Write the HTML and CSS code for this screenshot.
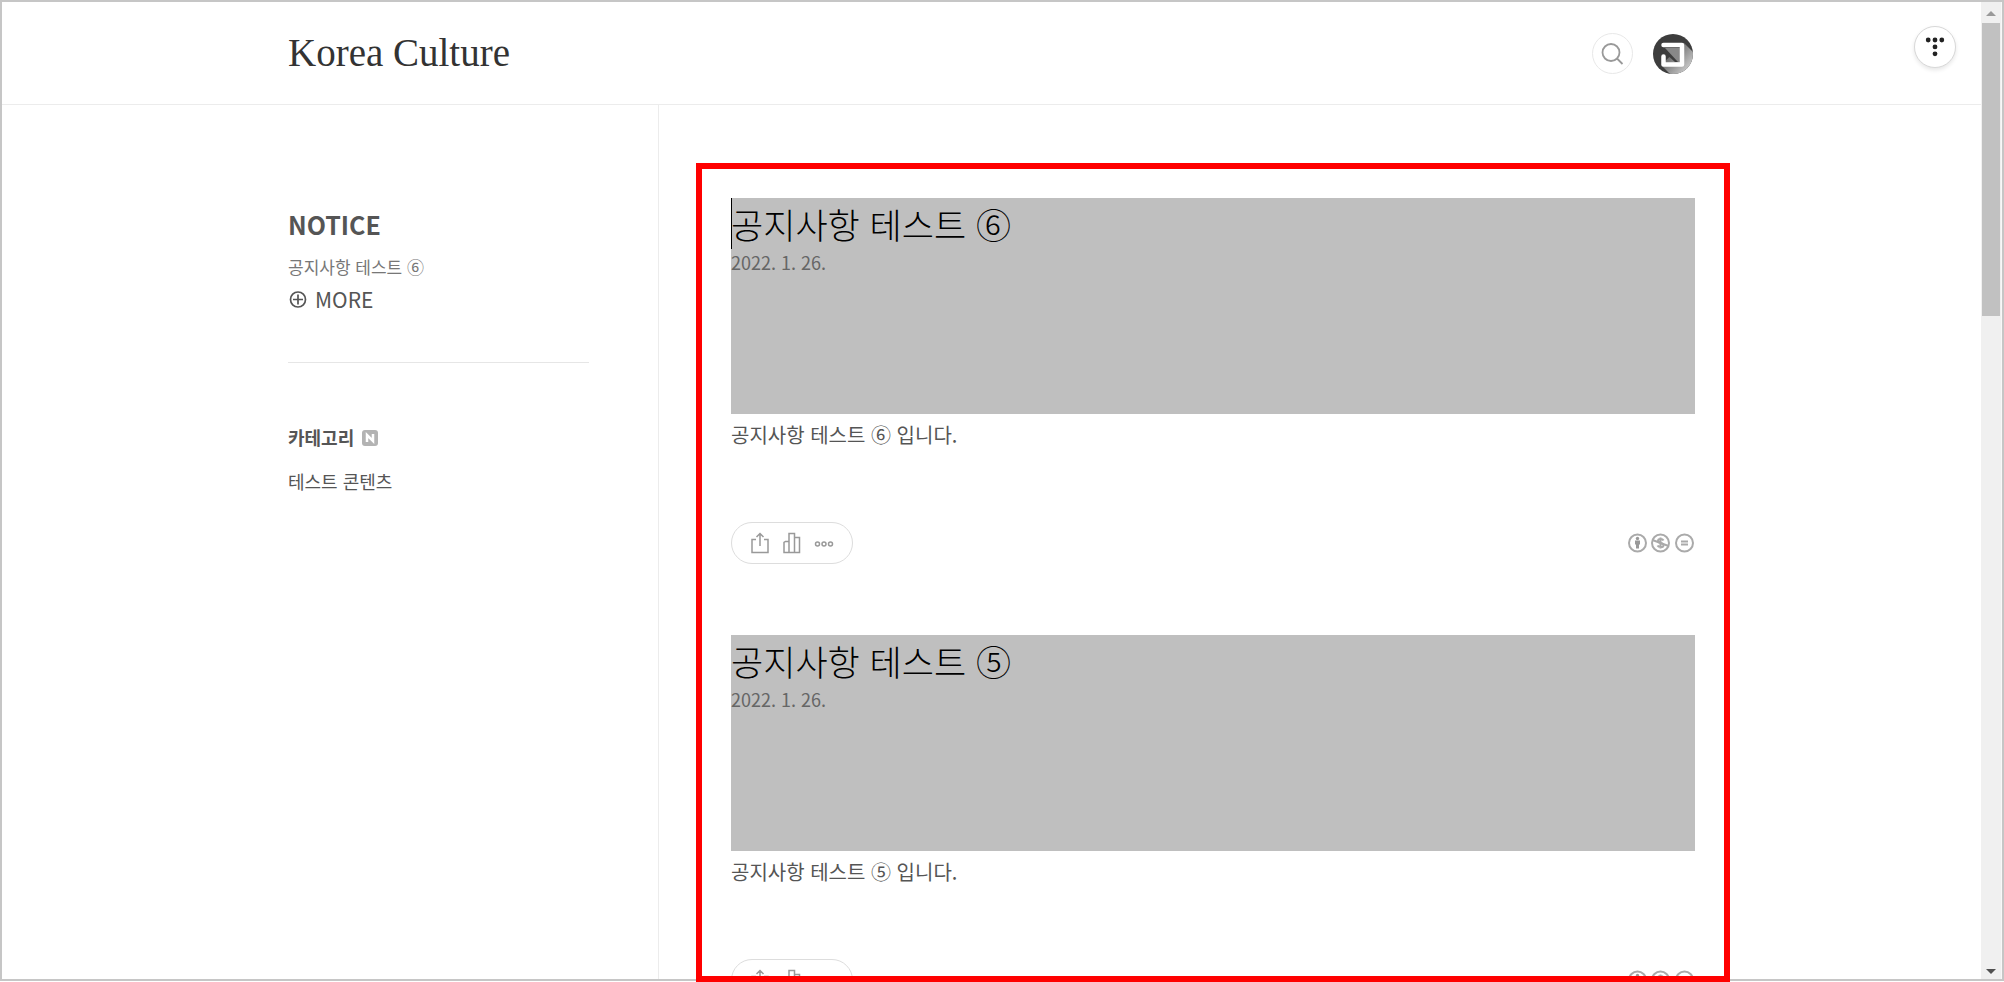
FILE: index.html
```html
<!DOCTYPE html>
<html lang="ko">
<head>
  <meta charset="UTF-8">
  <meta name="viewport" content="width=device-width, initial-scale=1.0">
  <title>Korea Culture</title>
  <link rel="stylesheet" href="styles.css">
</head>
<body>
  <!-- shared icons -->
  <svg class="sprite" aria-hidden="true">
    <symbol id="icon-share" viewBox="0 0 20 22">
      <path d="M6 7.500H2V20.500H18V7.500H14M10 14V2M6.500 5L10 1.500L13.500 5"/>
    </symbol>
    <symbol id="icon-stats" viewBox="0 0 20 22">
      <path d="M7 20.500H2V10.500L3.500 9.500H7M7 20.500V1.500H12.500V20.500H7M12.500 5.500H17.500V20.500H12.500"/>
    </symbol>
    <symbol id="icon-more" viewBox="0 0 20 22">
      <circle cx="3.500" cy="12" r="2"/><circle cx="10" cy="12" r="2"/><circle cx="16.500" cy="12" r="2"/>
    </symbol>
    <symbol id="icon-cc" viewBox="0 0 67 20">
      <g fill="none" stroke="#aaa" stroke-width="2">
        <circle cx="9.500" cy="10" r="8.500"/><circle cx="32.500" cy="10" r="8.500"/><circle cx="56.500" cy="10" r="8.500"/>
        <path d="M24.500 7L40.500 13"/>
        <path d="M35.500 7.500C34.500 5.500 30 5.500 30 8C30 10.500 35.500 9.500 35.500 12.200C35.500 14.800 30.500 14.500 29.500 12.500M32.500 4.500V15.500"/>
        <path d="M53 8.500H60M53 11.500H60"/>
      </g>
      <circle cx="9.500" cy="5.500" r="1.700" fill="#999"/>
      <path d="M7 7.500H12V11.500H11V15.500H8V11.500H7Z" fill="#999"/>
    </symbol>
  </svg>

  <div class="window">
    <div class="page">
      <header class="header">
        <div class="container header-inner">
          <h1 class="logo"><a href="#">Korea Culture</a></h1>
          <div class="header-tools">
            <button type="button" class="search-button" aria-label="검색">
              <svg width="24" height="24" viewBox="0 0 24 24" fill="none" stroke="#999" stroke-width="1.800">
                <circle cx="10" cy="10.500" r="8.500"/>
                <path d="M16 16.500L21.500 22"/>
              </svg>
            </button>
            <a href="#" class="profile" aria-label="프로필">
              <svg width="40" height="40" viewBox="0 0 40 40">
                <defs>
                  <linearGradient id="shade" x1="0.200" y1="0.200" x2="1" y2="0.900">
                    <stop offset="0" stop-color="#555"/>
                    <stop offset="1" stop-color="#ddd"/>
                  </linearGradient>
                  <clipPath id="round"><circle cx="20" cy="20" r="20"/></clipPath>
                </defs>
                <g clip-path="url(#round)">
                  <rect width="40" height="40" fill="#3d3d3d"/>
                  <path d="M31 9L40 18V40H17L8 31Z" fill="url(#shade)"/>
                  <path d="M12 13H27V28H22L12 19Z" fill="#3d3d3d"/>
                  <path d="M12 14H27V28H25Z" fill="#888"/>
                </g>
                <path d="M10.500 11H29V30.500H10.500V22.500" fill="none" stroke="#fff" stroke-width="4.500" stroke-linejoin="round" stroke-linecap="round"/>
              </svg>
            </a>
          </div>
        </div>
        <button type="button" class="menu-button" aria-label="티스토리 메뉴">
          <svg width="20" height="20" viewBox="0 0 20 20" fill="#222">
            <circle cx="3.200" cy="3" r="2.400"/><circle cx="10" cy="3" r="2.400"/><circle cx="16.800" cy="3" r="2.400"/>
            <circle cx="10" cy="9.900" r="2.400"/><circle cx="10" cy="16.800" r="2.400"/>
          </svg>
        </button>
      </header>

      <div class="container content">
        <aside class="sidebar">
          <section class="notice">
            <h2>NOTICE</h2>
            <a href="#" class="notice-link">공지사항 테스트 ⑥</a>
            <a href="#" class="more">
              <svg width="18" height="18" viewBox="0 0 18 18" fill="none" stroke="#555" stroke-width="1.700">
                <circle cx="9" cy="9.500" r="7.500"/><path d="M9 4.500V14.500M4 9.500H14"/>
              </svg>
              MORE
            </a>
          </section>
          <nav class="category">
            <a href="#" class="category-title">카테고리
              <svg width="16" height="18" viewBox="0 0 16 18">
                <rect y="2" width="16" height="16" rx="3" fill="#b3b3b3"/>
                <path d="M5 14V7L11 13V6" fill="none" stroke="#fff" stroke-width="2.500"/>
              </svg>
            </a>
            <a href="#" class="category-link">테스트 콘텐츠</a>
          </nav>
        </aside>

        <main class="posts">
          <article class="post">
            <header class="post-head active">
              <h2>공지사항 테스트 ⑥</h2>
              <time datetime="2022-01-26">2022. 1. 26.</time>
            </header>
            <p>공지사항 테스트 ⑥ 입니다.</p>
            <footer class="post-foot">
              <div class="actions">
                <button type="button" aria-label="공유하기"><svg><use href="#icon-share"/></svg></button>
                <button type="button" aria-label="통계"><svg><use href="#icon-stats"/></svg></button>
                <button type="button" aria-label="더보기"><svg><use href="#icon-more"/></svg></button>
              </div>
              <a href="#" aria-label="저작자표시 비영리 변경금지"><svg class="license"><use href="#icon-cc"/></svg></a>
            </footer>
          </article>

          <article class="post">
            <header class="post-head">
              <h2>공지사항 테스트 ⑤</h2>
              <time datetime="2022-01-26">2022. 1. 26.</time>
            </header>
            <p>공지사항 테스트 ⑤ 입니다.</p>
            <footer class="post-foot">
              <div class="actions">
                <button type="button" aria-label="공유하기"><svg><use href="#icon-share"/></svg></button>
                <button type="button" aria-label="통계"><svg><use href="#icon-stats"/></svg></button>
                <button type="button" aria-label="더보기"><svg><use href="#icon-more"/></svg></button>
              </div>
              <a href="#" aria-label="저작자표시 비영리 변경금지"><svg class="license"><use href="#icon-cc"/></svg></a>
            </footer>
          </article>
        </main>
      </div>
    </div>

    <div class="scrollbar" aria-hidden="true">
      <span class="arrow-up"></span>
      <span class="thumb"></span>
      <span class="arrow-down"></span>
    </div>
  </div>
</body>
</html>
```

FILE: styles.css
```css
* {
  box-sizing: border-box;
}
body {
  margin: 0;
  height: 100vh;
  padding-bottom: 1px;
  overflow: hidden;
  font-family: "Noto Sans CJK KR", "Noto Sans", sans-serif;
  font-size: 20px;
  color: #555;
  background: #fff;
}
h1, h2, p {
  margin: 0;
}
a {
  color: inherit;
  text-decoration: none;
}
button {
  padding: 0;
  border: none;
  background: none;
  cursor: pointer;
}
svg {
  display: block;
}
.sprite {
  position: absolute;
  width: 0;
  height: 0;
}

.window {
  display: flex;
  height: 100%;
  border: 2px solid #c6c6c6;
}
.page {
  flex: 1;
  min-width: 0;
  display: flex;
  flex-direction: column;
}
.container {
  width: 100%;
  max-width: 1407px;
  margin: 0 auto;
}

/* header */
.header {
  position: relative;
  border-bottom: 1px solid #ececec;
}
.header-inner {
  display: flex;
  align-items: center;
  justify-content: space-between;
  height: 102px;
}
.logo {
  font-family: "Liberation Serif", serif;
  font-size: 39px;
  line-height: 48px;
  font-weight: 400;
  color: #333;
}
.header-tools {
  display: flex;
  align-items: center;
  gap: 20px;
  padding: 1px 2px 0 0;
}
.search-button {
  display: flex;
  align-items: center;
  justify-content: center;
  width: 41px;
  height: 41px;
  border: 1px solid #e8e8e8;
  border-radius: 50%;
}
.menu-button {
  position: absolute;
  top: 24px;
  right: 25px;
  display: flex;
  align-items: center;
  justify-content: center;
  width: 42px;
  height: 42px;
  border: 1px solid #d8d8d8;
  border-radius: 50%;
  background: #fff;
  box-shadow: 0 2px 4px rgba(0, 0, 0, 0.1);
}

/* columns */
.content {
  flex: 1;
  min-height: 0;
  display: grid;
  grid-template-columns: 371px minmax(0, 1fr);
  grid-template-rows: minmax(0, 1fr);
}
.sidebar {
  padding: 99px 69px 0 0;
  border-right: 1px solid #ececec;
}
.notice {
  padding-bottom: 46px;
  border-bottom: 1px solid #e6e6e6;
}
.notice h2 {
  font-size: 25px;
  line-height: 40px;
  font-weight: 700;
}
.notice-link {
  display: block;
  margin-top: 8px;
  font-size: 17px;
  line-height: 30px;
  color: #777;
}
.more {
  display: flex;
  align-items: center;
  gap: 8px;
  padding-left: 1px;
  font-size: 21px;
  line-height: 34px;
}
.category {
  padding-top: 59px;
}
.category-title {
  display: flex;
  align-items: center;
  gap: 8px;
  font-size: 18px;
  line-height: 30px;
  font-weight: 700;
}
.category-link {
  display: block;
  margin-top: 14px;
  font-size: 18px;
  line-height: 30px;
}

/* post list */
.posts {
  margin: 58px -35px -3px 37px;
  padding: 29px 29px 0;
  border: 6px solid #f00;
  overflow: hidden;
}
.post {
  margin-bottom: 71px;
}
.post-head {
  position: relative;
  height: 216px;
  background: #bfbfbf;
}
.post-head h2 {
  font-size: 35px;
  line-height: 51px;
  font-weight: 300;
  color: #000;
}
.post-head time {
  display: block;
  font-size: 18px;
  line-height: 26px;
  color: #666;
}
/* text caret at the start of the title */
.active::before {
  content: "";
  position: absolute;
  top: 0;
  left: 0;
  width: 1px;
  height: 51px;
  background: #000;
}
.post p {
  margin-top: 4px;
  font-size: 20px;
  line-height: 34px;
}
.post-foot {
  display: flex;
  align-items: center;
  justify-content: space-between;
  margin-top: 70px;
}
.actions {
  display: flex;
  align-items: center;
  gap: 12px;
  height: 42px;
  padding: 0 18px;
  border: 1px solid #ddd;
  border-radius: 21px;
}
.actions svg {
  width: 20px;
  height: 22px;
  fill: none;
  stroke: #999;
  stroke-width: 1.5;
}
.license {
  width: 67px;
  height: 20px;
}

/* scrollbar */
.scrollbar {
  display: flex;
  flex-direction: column;
  align-items: center;
  width: 21px;
  padding: 9px 0 5px;
  border-right: 1px solid #f8f8f8;
  background: #f0f0f0;
}
.arrow-up, .arrow-down {
  border: 5px solid transparent;
}
.arrow-up {
  border-top: none;
  border-bottom-color: #999;
}
.thumb {
  width: 18px;
  height: 30.4%;
  margin: 7px 0 auto;
  background: #c1c1c1;
}
.arrow-down {
  border-bottom: none;
  border-top-color: #505050;
}
```
